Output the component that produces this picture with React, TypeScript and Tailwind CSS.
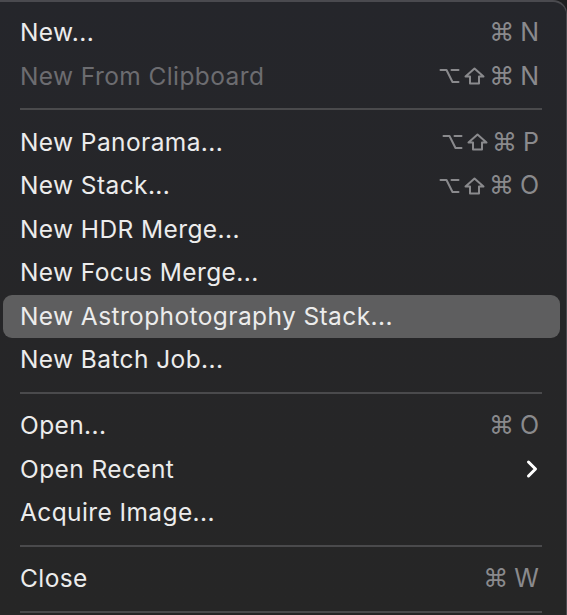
import { ChevronRight } from 'lucide-react';

type Item =
  | { kind: 'sep' }
  | { kind: 'item'; label: string; keys?: string; disabled?: boolean; active?: boolean; submenu?: boolean };

const ITEMS: Item[] = [
  { kind: 'item', label: 'New...', keys: '⌘N' },
  { kind: 'item', label: 'New From Clipboard', keys: '⌥⇧⌘N', disabled: true },
  { kind: 'sep' },
  { kind: 'item', label: 'New Panorama...', keys: '⌥⇧⌘P' },
  { kind: 'item', label: 'New Stack...', keys: '⌥⇧⌘O' },
  { kind: 'item', label: 'New HDR Merge...' },
  { kind: 'item', label: 'New Focus Merge...' },
  { kind: 'item', label: 'New Astrophotography Stack...', active: true },
  { kind: 'item', label: 'New Batch Job...' },
  { kind: 'sep' },
  { kind: 'item', label: 'Open...', keys: '⌘O' },
  { kind: 'item', label: 'Open Recent', submenu: true },
  { kind: 'item', label: 'Acquire Image...' },
  { kind: 'sep' },
  { kind: 'item', label: 'Close', keys: '⌘W' },
  { kind: 'sep' },
];

function Option() {
  return (
    <svg width="21" height="16" viewBox="0 0 21 16" fill="none" stroke="currentColor" strokeWidth="2" strokeLinecap="round" strokeLinejoin="round">
      <path d="M1.5 2 H7.5 L13.5 14 H19.5 M12.5 2 H19.5" />
    </svg>
  );
}

function Shift() {
  return (
    <svg width="21" height="18" viewBox="0 0 21 18" fill="none" stroke="currentColor" strokeWidth="2" strokeLinejoin="round">
      <path d="M10.5 1.5 L19.5 9.5 H15 V16.5 H6 V9.5 H1.5 Z" />
    </svg>
  );
}

function Keys({ keys }: { keys: string }) {
  const chars = Array.from(keys);
  return (
    <span className="flex items-center gap-[4px] text-[#8a8a8d]">
      {chars.map((k, i) => {
        if (k === '⌥') return <Option key={i} />;
        if (k === '⇧') return <Shift key={i} />;
        if (k === '⌘')
          return (
            <span key={i} className="text-[25px] leading-none" style={{ fontFamily: '"DejaVu Sans", sans-serif' }}>
              {k}
            </span>
          );
        return (
          <span key={i} className="ml-[2px] text-[25px] leading-none">
            {k}
          </span>
        );
      })}
    </span>
  );
}

export default function App() {
  return (
    <div className="h-[615px] w-[567px] overflow-hidden bg-[#1e1e20]">
      <div
        className="h-full w-full rounded-tr-[14px] border-t-2 border-r border-[#4a4a4f] bg-gradient-to-b from-[#25262b] via-[#262628] to-[#262626] pt-[9px]"
        style={{ fontFamily: 'Inter, "Liberation Sans", sans-serif' }}
      >
        {ITEMS.map((it, i) =>
          it.kind === 'sep' ? (
            <div key={i} className="flex h-[22.5px] items-center px-5">
              <div className="h-[2px] w-[522px] bg-[#4a4a4c]" />
            </div>
          ) : (
            <div key={i} className="h-[43.5px] pl-[3px] pr-[6px]">
              <div
                className={`flex h-full items-center justify-between rounded-[9px] pl-[17px] pr-[21px] ${
                  it.active ? 'bg-[#5e5e5f]' : ''
                }`}
              >
                <span
                  className={`text-[24.5px] tracking-[0.4px] ${
                    it.disabled ? 'text-[#6c6c70]' : 'text-[#ececec]'
                  }`}
                >
                  {it.label}
                </span>
                {it.keys && <Keys keys={it.keys} />}
                {it.submenu && <ChevronRight className="mr-[-7px] h-7 w-7 text-white" strokeWidth={2.6} />}
              </div>
            </div>
          ),
        )}
      </div>
    </div>
  );
}
